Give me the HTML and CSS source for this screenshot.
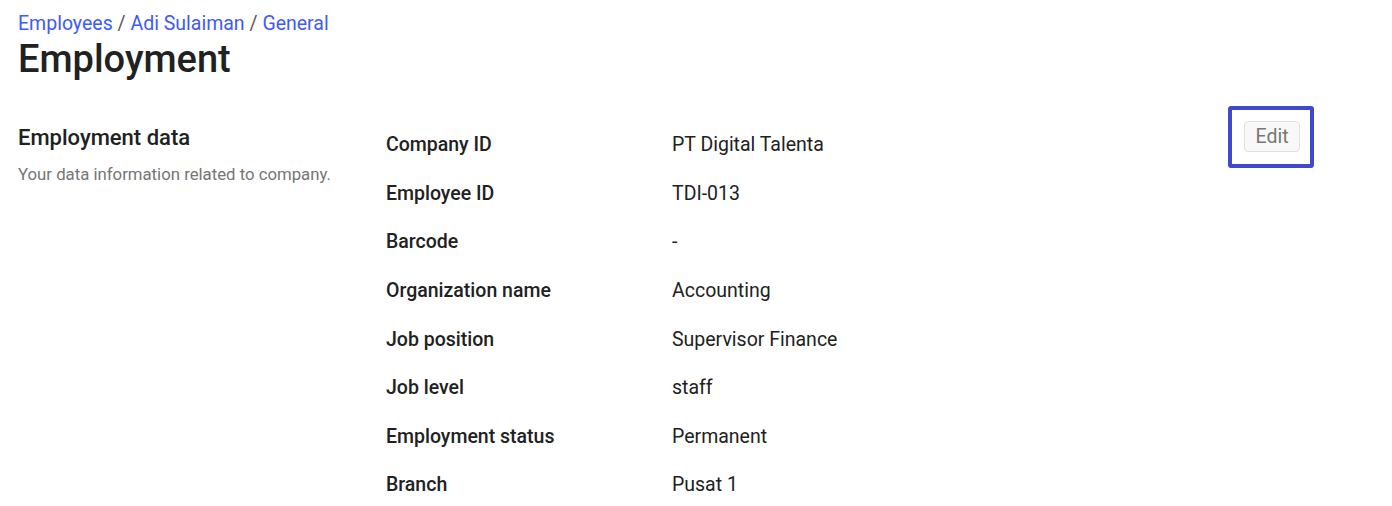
FILE: index.html
```html
<!DOCTYPE html>
<html lang="en">
<head>
  <meta charset="UTF-8" />
  <meta name="viewport" content="width=device-width, initial-scale=1.0" />
  <title>Employment</title>
  <link rel="stylesheet" href="styles.css">
</head>
<body>
  <div class="page">
    <nav class="crumbs">
      <a href="#">Employees</a> / <a href="#">Adi Sulaiman</a> / <a href="#">General</a>
    </nav>
    <h1>Employment</h1>

    <div class="section">
      <div class="intro">
        <h2>Employment data</h2>
        <p>Your data information related to company.</p>
      </div>

      <dl class="fields">
        <dt>Company ID</dt><dd>PT Digital Talenta</dd>
        <dt>Employee ID</dt><dd>TDI-013</dd>
        <dt>Barcode</dt><dd>-</dd>
        <dt>Organization name</dt><dd>Accounting</dd>
        <dt>Job position</dt><dd>Supervisor Finance</dd>
        <dt>Job level</dt><dd>staff</dd>
        <dt>Employment status</dt><dd>Permanent</dd>
        <dt>Branch</dt><dd>Pusat 1</dd>
      </dl>

      <div class="actions">
        <span class="focus-ring"><button class="edit">Edit</button></span>
      </div>
    </div>
  </div>
</body>
</html>
```

FILE: styles.css
```css
html, body {
  margin: 0;
  padding: 0;
  font-family: Roboto, "Liberation Sans", sans-serif;
  color: #212121;
  background: #fff;
}
.page {
  padding: 13px 18px 0;
}
.crumbs {
  font-size: 19.5px;
  line-height: 22px;
  color: #555;
}
.crumbs a {
  color: #3d5afe;
  text-decoration: none;
}
h1 {
  margin: 1px 0 0;
  font-size: 38px;
  line-height: 46px;
  font-weight: 500;
}
.section {
  display: flex;
  margin-top: 39px;
}
.intro {
  width: 368px;
  flex-shrink: 0;
  padding-top: 3px;
}
.intro h2 {
  margin: 0;
  font-size: 22px;
  line-height: 28px;
  font-weight: 500;
}
.intro p {
  margin: 12px 0 0;
  font-size: 16.75px;
  line-height: 20px;
  color: #757575;
}
.fields {
  flex: 1;
  margin: 0;
  display: grid;
  grid-template-columns: 286px 1fr;
  font-size: 19.5px;
  line-height: 24px;
}
.fields dt,
.fields dd {
  margin: 0;
  padding: 12.3px 0;
}
.fields dt { font-weight: 500; }
.actions {
  margin-right: 60px;
}
.focus-ring {
  display: block;
  margin-top: -15px;
  padding: 11px 10px 12px 12px;
  border: 4px solid #4148d0;
  border-radius: 3px;
}
.edit {
  display: block;
  height: 31px;
  width: 56px;
  padding: 0;
  font-family: inherit;
  font-size: 19.5px;
  color: #777;
  background: #f8f8f8;
  border: 1px solid #e0e0e0;
  border-radius: 4px;
  cursor: pointer;
}
```
